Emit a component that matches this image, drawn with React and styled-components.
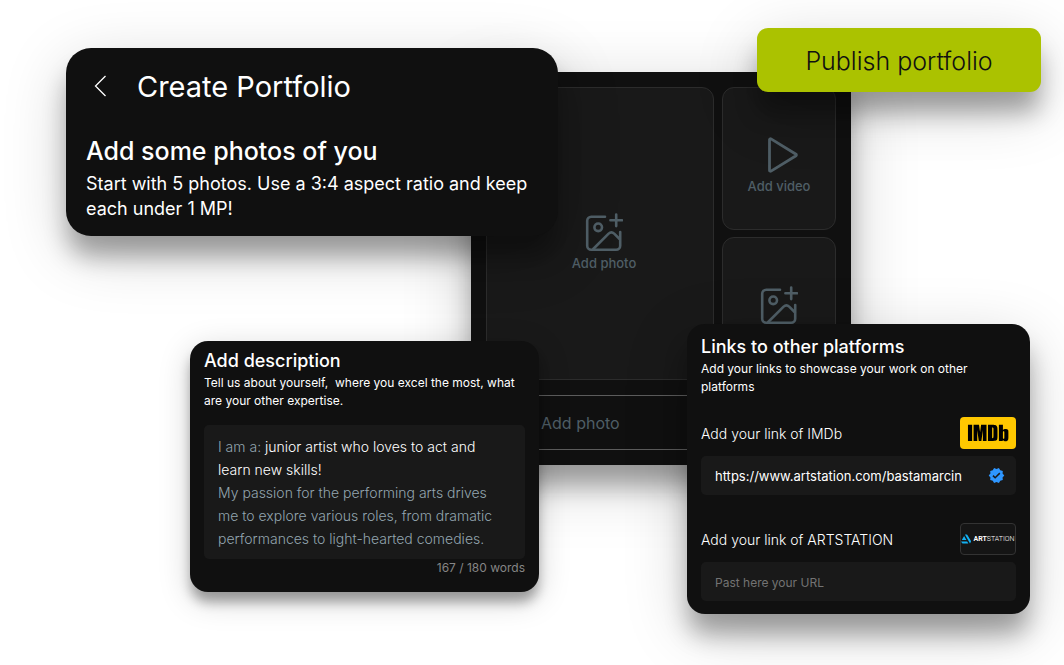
import React, { useState } from 'react'
import styled, { createGlobalStyle } from 'styled-components'
import { SiImdb, SiArtstation } from 'react-icons/si'
import { MdVerified } from 'react-icons/md'

const GlobalStyle = createGlobalStyle`
  * {
    box-sizing: border-box;
    margin: 0;
  }

  body {
    background: #ffffff;
    font-family: Inter, 'Open Sans', sans-serif;
    color: #ffffff;
  }

  button, input, textarea {
    font-family: inherit;
  }
`

/* The cards overlap, so each one takes its own lines of one shared grid */
const Stage = styled.main`
  display: grid;
  grid-template-columns:
    [start] minmax(0, 66fr) [create] minmax(0, 124fr) [about] minmax(0, 281fr)
    [board] minmax(0, 68fr) [about-end] minmax(0, 19fr) [create-end] minmax(0, 129fr)
    [links] minmax(0, 70fr) [publish] minmax(0, 94fr) [board-end] minmax(0, 179fr)
    [links-end] minmax(0, 11fr) [publish-end] minmax(0, 23fr);
  grid-template-rows:
    28px [publish-top] 20px [create-top] 24px [board-top] 252px
    [links-top] 17px [about-top] auto [bottom];
  align-items: start;
  padding-bottom: 51px;
  overflow: hidden;
`

const bigShadow = '0 22px 24px -2px rgba(0, 0, 0, 0.32), 0 16px 64px rgba(0, 0, 0, 0.18)'
const smallShadow = '0 11px 12px -1px rgba(0, 0, 0, 0.32), 0 8px 32px rgba(0, 0, 0, 0.18)'

const Card = styled.section`
  grid-column: ${(p) => p.$area} / ${(p) => p.$area}-end;
  grid-row: ${(p) => p.$area}-top / bottom;
  background: #101010;
  border-radius: ${(p) => p.$radius || 18}px;
  padding: ${(p) => p.$pad};
  box-shadow: ${(p) => (p.$big ? bigShadow : smallShadow)};
`

const Board = styled(Card)`
  border-radius: 0;
`

const Tiles = styled.div`
  display: grid;
  grid-template-columns: 2fr 1fr;
  grid-template-rows: 143px 143px;
  gap: 7px 8px;
`

const Tile = styled.button`
  grid-row: ${(p) => (p.$tall ? 'span 2' : 'auto')};
  display: flex;
  flex-direction: column;
  align-items: center;
  justify-content: center;
  gap: 4px;
  padding: ${(p) => p.$pad};
  background: #191919;
  border: 1px solid #2c2c2c;
  border-radius: 12px;
  color: #4f5e66;
  font-size: 13px;
  line-height: 16px;
  font-weight: 500;
`

const WideButton = styled.button`
  width: 100%;
  height: 55px;
  margin-top: 15px;
  padding: 0 54px;
  text-align: left;
  background: transparent;
  border: 1px solid #5c5c5c;
  border-radius: 8px;
  color: #4f5e66;
  font-size: 16px;
  font-weight: 400;
`

const TopBar = styled.header`
  display: flex;
  align-items: center;
  gap: 27px;
  height: 40px;
`

const BackButton = styled.button`
  display: flex;
  padding: 0;
  border: 0;
  background: none;
  color: #ffffff;
`

const PageTitle = styled.h1`
  font-size: 29px;
  line-height: 40px;
  font-weight: 400;
`

const Heading = styled.h2`
  font-size: ${(p) => (p.$big ? 25 : 18)}px;
  line-height: ${(p) => (p.$big ? 40 : 24)}px;
  margin-top: ${(p) => (p.$big ? 24 : 0)}px;
  font-weight: 500;
`

const Lead = styled.p`
  font-size: ${(p) => (p.$big ? 18 : 12)}px;
  line-height: ${(p) => (p.$big ? 25 : 18)}px;
  padding-top: ${(p) => (p.$big ? 0 : 1)}px;
`

const PublishButton = styled.button`
  grid-column: publish / publish-end;
  grid-row: publish-top / bottom;
  height: 64px;
  padding: 2px 0 0;
  border: 0;
  border-radius: 11px;
  background: #abc200;
  color: #101010;
  font-size: 25px;
  font-weight: 300;
  box-shadow: ${bigShadow};
`

const Editor = styled.div`
  margin-top: 15px;
  padding: 10px 14px 9px;
  border-radius: 5px;
  background: #191919;
  color: #93a5af;
  font-size: 14px;
  line-height: 23px;
  font-weight: 300;

  p span {
    color: #ffffff;
  }
`

const Passion = styled.textarea`
  display: block;
  width: 100%;
  height: 69px;
  padding: 0;
  border: 0;
  resize: none;
  overflow: hidden;
  background: transparent;
  color: inherit;
  font-size: 14px;
  line-height: 23px;
  font-weight: 300;
`

const Counter = styled.p`
  color: #858585;
  text-align: right;
  font-size: 12px;
  line-height: 18px;
`

const LinkRow = styled.div`
  display: flex;
  align-items: center;
  justify-content: space-between;
  margin-top: ${(p) => p.$gap}px;
  margin-bottom: 7px;

  label {
    font-size: 14px;
    font-weight: 300;
  }
`

const Badge = styled.div`
  display: flex;
  align-items: center;
  justify-content: center;
  gap: 2px;
  width: 56px;
  height: 32px;
  flex: none;
  overflow: hidden;
  border-radius: 4px;
  background: ${(p) => (p.$imdb ? '#ffc800' : '#151515')};
  border: ${(p) => (p.$imdb ? '0' : '1px solid #333333')};
  color: ${(p) => (p.$imdb ? '#000000' : '#13aff0')};

  svg {
    flex: none;
  }
`

const Wordmark = styled.span`
  color: #ffffff;
  font-family: Roboto, sans-serif;
  font-size: 7px;
  font-weight: 300;

  b {
    font-weight: 700;
  }
`

const Field = styled.div`
  display: flex;
  align-items: center;
  height: 39px;
  padding: 0 11px 0 14px;
  border-radius: 5px;
  background: #191919;
  color: #2e96ff;

  input {
    flex: 1;
    min-width: 0;
    padding: 0;
    border: 0;
    outline: 0;
    background: transparent;
    color: #ffffff;
    font-size: 13px;
    line-height: 18px;
  }

  input::placeholder {
    color: #737373;
    font-size: 12px;
  }
`

const PhotoIcon = () => (
  <svg width="38" height="38" viewBox="0 0 38 38" fill="none" stroke="currentColor" strokeWidth="2.6" strokeLinecap="round" strokeLinejoin="round">
    <path d="M20 3.7H6.2a4 4 0 0 0-4 4v25a4 4 0 0 0 4 4h25a4 4 0 0 0 4-4V19" />
    <path d="M31.2 1.5v11.6M25.4 7.3H37" />
    <circle cx="13.2" cy="14.3" r="3.8" />
    <path d="M8.2 36 23.6 20.6q2.8-2.6 5.6 0L34.6 26" />
  </svg>
)

const PlayIcon = () => (
  <svg width="38" height="38" viewBox="0 0 38 38" fill="none" stroke="currentColor" strokeWidth="2.8" strokeLinejoin="round">
    <path d="M9.5 3.7v30.6a1 1 0 0 0 1.5.8l25-15.3a1 1 0 0 0 0-1.6l-25-15.3a1 1 0 0 0-1.5.8z" />
  </svg>
)

const BackIcon = () => (
  <svg width="24" height="24" viewBox="0 0 24 24" fill="none" stroke="currentColor" strokeWidth="1.3">
    <path d="M19.5 1 9.5 11l10 10" />
  </svg>
)

export default function App() {
  const [passion, setPassion] = useState(
    'My passion for the performing arts drives me to explore various roles, from dramatic performances to light-hearted comedies.'
  )
  const [imdb, setImdb] = useState('https://www.artstation.com/bastamarcin')

  return (
    <>
      <GlobalStyle />
      <Stage>
        <Board $area="board" $pad="15px" $big>
          <Tiles>
            <Tile $tall $pad="16px 0 0 8px">
              <PhotoIcon />
              Add photo
            </Tile>
            <Tile $pad="12px 0 0">
              <PlayIcon />
              Add video
            </Tile>
            <Tile $pad="0 0 8px" aria-label="Add another photo">
              <PhotoIcon />
            </Tile>
          </Tiles>
          <WideButton>Add photo</WideButton>
        </Board>

        <Card $area="create" $radius={25} $pad="19px 20px 15px" $big>
          <TopBar>
            <BackButton aria-label="Back">
              <BackIcon />
            </BackButton>
            <PageTitle>Create Portfolio</PageTitle>
          </TopBar>
          <Heading $big>Add some photos of you</Heading>
          <Lead $big>Start with 5 photos. Use a 3:4 aspect ratio and keep each under 1 MP!</Lead>
        </Card>

        <PublishButton>Publish portfolio</PublishButton>

        <Card $area="about" $pad="8px 14px 15px">
          <Heading>Add description</Heading>
          <Lead>Tell us about yourself, &nbsp;where you excel the most, what are your other expertise.</Lead>
          <Editor>
            <p>
              I am a: <span>junior artist who loves to act and learn new skills!</span>
            </p>
            <Passion aria-label="Description" value={passion} onChange={(e) => setPassion(e.target.value)} />
          </Editor>
          <Counter>167 / 180 words</Counter>
        </Card>

        <Card $area="links" $pad="11px 14px 13px" $big>
          <Heading>Links to other platforms</Heading>
          <Lead>Add your links to showcase your work on other platforms</Lead>
          <LinkRow $gap={21}>
            <label htmlFor="imdb">Add your link of IMDb</label>
            <Badge $imdb>
              <SiImdb size={44} viewBox="2 2 20 20" />
            </Badge>
          </LinkRow>
          <Field>
            <input id="imdb" value={imdb} onChange={(e) => setImdb(e.target.value)} />
            <MdVerified size={17} />
          </Field>
          <LinkRow $gap={28}>
            <label htmlFor="artstation">Add your link of ARTSTATION</label>
            <Badge>
              <SiArtstation size={10} />
              <Wordmark>
                <b>ART</b>STATION
              </Wordmark>
            </Badge>
          </LinkRow>
          <Field>
            <input id="artstation" placeholder="Past here your URL" />
          </Field>
        </Card>
      </Stage>
    </>
  )
}
